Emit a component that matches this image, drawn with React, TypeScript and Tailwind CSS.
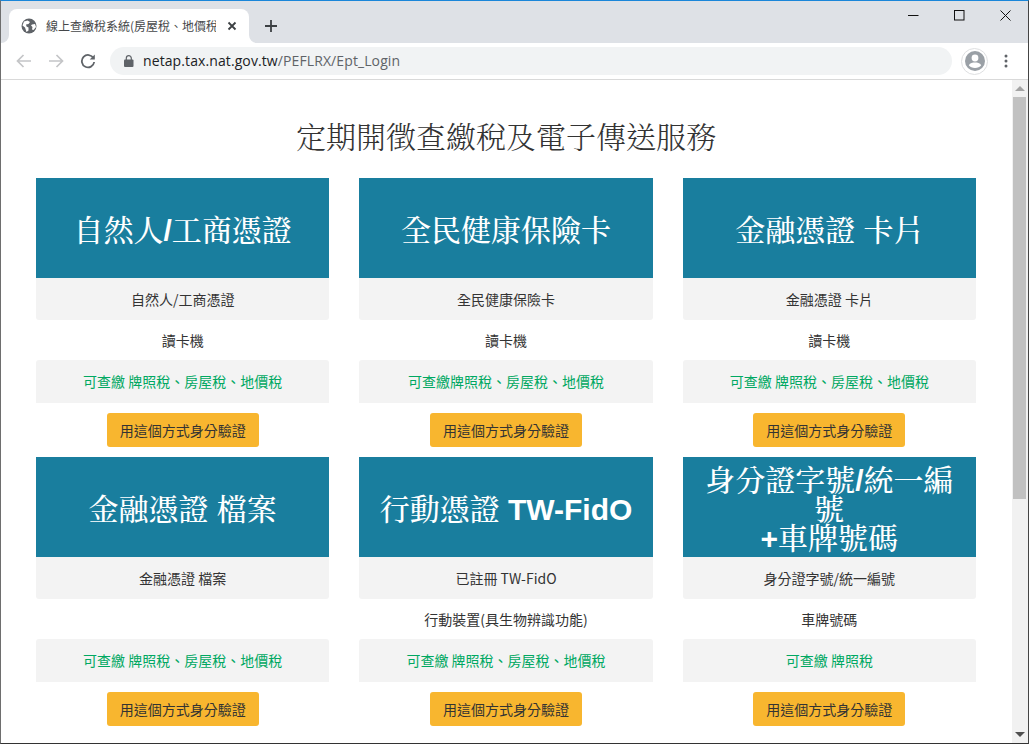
import React from "react";

type Card = { head: React.ReactNode; label: string; device: string; scope: string };

const L = ({ children }: { children: React.ReactNode }) => <span className="font-bold">{children}</span>;

const cards: Card[] = [
  { head: <>自然人<L>/</L>工商憑證</>, label: "自然人/工商憑證", device: "讀卡機", scope: "可查繳 牌照稅、房屋稅、地價稅" },
  { head: "全民健康保險卡", label: "全民健康保險卡", device: "讀卡機", scope: "可查繳牌照稅、房屋稅、地價稅" },
  { head: "金融憑證 卡片", label: "金融憑證 卡片", device: "讀卡機", scope: "可查繳 牌照稅、房屋稅、地價稅" },
  { head: "金融憑證 檔案", label: "金融憑證 檔案", device: "", scope: "可查繳 牌照稅、房屋稅、地價稅" },
  { head: <>行動憑證 <L>TW-FidO</L></>, label: "已註冊 TW-FidO", device: "行動裝置(具生物辨識功能)", scope: "可查繳 牌照稅、房屋稅、地價稅" },
  { head: <>身分證字號<L>/</L>統一編號<br /><L>+</L>車牌號碼</>, label: "身分證字號/統一編號", device: "車牌號碼", scope: "可查繳 牌照稅" },
];

const SANS = '"Noto Sans CJK TC", sans-serif';

function CardView({ c }: { c: Card }) {
  return (
    <div className="flex flex-col items-stretch text-center text-[14px] text-[#333]">
      <div className="flex h-[100px] items-center justify-center overflow-hidden bg-[#197e9e] px-[15px] pt-[4px] text-[30px] font-medium leading-[29px] text-white">
        <div>{c.head}</div>
      </div>
      <div style={{ fontFamily: SANS }} className="flex flex-col">
        <div className="flex h-[42px] items-center justify-center rounded-b-[3px] bg-[#f3f3f3] pt-[1px]">{c.label}</div>
        <div className="flex h-[40px] items-center justify-center">{c.device}</div>
        <div className="flex h-[43px] items-center justify-center rounded-t-[3px] bg-[#f3f3f3] text-[#00a862]">{c.scope}</div>
        <div className="flex justify-center pt-[10px] pb-[10px]">
          <button className="h-[34px] w-[152px] rounded-[3px] bg-[#f8b62f] pt-[1px] text-[14px] text-[#333]">用這個方式身分驗證</button>
        </div>
      </div>
    </div>
  );
}

export default function App() {
  return (
    <div
      className="flex h-[744px] w-[1029px] flex-col overflow-hidden border border-t-[#1a86d9] border-r-[#444] border-b-[#333] border-l-[#6e6e6e] bg-white"
      style={{ fontFamily: '"Liberation Sans", "Noto Serif CJK TC", "Noto Sans CJK TC", sans-serif' }}
    >
      {/* tab strip */}
      <div className="flex h-[42px] shrink-0 items-end bg-[#dee1e6] pl-[8px]" style={{ fontFamily: SANS }}>
        <div className="relative flex h-[34px] w-[240px] items-center rounded-t-[8px] bg-white pl-[12px] pr-[12px]">
          <svg width="16" height="16" viewBox="0 0 16 16" className="shrink-0">
            <circle cx="8" cy="8" r="7.5" fill="#5f6368" />
            <path d="M3 3.500 6.500 2.500 9 4 7.500 6 5 6.500 5.500 8.500 7.500 9.500 7.500 12.500 5.500 14 4 9.500 1.500 7.500ZM11 6.500 14 6 15 9 12.500 12 11 11.500 11.500 9 10 7.500Z" fill="#fff" />
          </svg>
          <div className="ml-[9px] w-[171px] overflow-hidden whitespace-nowrap text-[12px] text-[#45474a]">線上查繳稅系統(房屋稅、地價稅</div>
          <svg width="10" height="10" viewBox="0 0 10 10" className="ml-[11px] shrink-0">
            <path d="M1.500 1.500 8.500 8.500M8.500 1.500 1.500 8.500" stroke="#3c4043" strokeWidth="1.8" />
          </svg>
          <svg width="8" height="8" viewBox="0 0 8 8" className="absolute bottom-0 right-[-8px]">
            <path d="M0 0V8H8A8 8 0 0 1 0 0Z" fill="#fff" />
          </svg>
          <svg width="8" height="8" viewBox="0 0 8 8" className="absolute bottom-0 left-[-8px]">
            <path d="M8 0V8H0A8 8 0 0 0 8 0Z" fill="#fff" />
          </svg>
        </div>
        <div className="ml-[14px] mb-[9px] flex h-[16px] w-[16px] items-center justify-center">
          <svg width="14" height="14" viewBox="0 0 14 14">
            <path d="M7 1V13M1 7H13" stroke="#3c4043" strokeWidth="1.8" />
          </svg>
        </div>
        <div className="mb-[22px] ml-auto flex items-center self-end pr-[17px]">
          <svg width="11" height="11" viewBox="0 0 11 11" className="mr-[35px]"><path d="M0 5.500H10.500" stroke="#111" strokeWidth="1" /></svg>
          <svg width="11" height="11" viewBox="0 0 11 11" className="mr-[35px]"><rect x=".5" y=".5" width="9.500" height="9.500" fill="none" stroke="#111" /></svg>
          <svg width="11" height="11" viewBox="0 0 11 11"><path d="M.5.5 10.500 10.500M10.500.5.5 10.500" stroke="#111" strokeWidth="1" /></svg>
        </div>
      </div>

      {/* toolbar */}
      <div className="flex h-[37px] shrink-0 items-center border-b border-b-[#d9d9d9] bg-white pl-[15px] pr-[13px]">
        <svg width="16" height="14" viewBox="0 0 16 14"><path d="M15 7H2M7.500 1 1.500 7l6 6" fill="none" stroke="#c4c5c7" strokeWidth="1.7" /></svg>
        <svg width="16" height="14" viewBox="0 0 16 14" className="ml-[16px]"><path d="M1 7H14M8.500 1l6 6-6 6" fill="none" stroke="#c4c5c7" strokeWidth="1.7" /></svg>
        <svg width="16" height="16" viewBox="0 0 16 16" className="ml-[16px]"><path d="M13.500 5.200A6.200 6.200 0 1 0 14.200 9" fill="none" stroke="#5f6368" strokeWidth="1.8" /><path d="M14.800 1.500V6.600H9.700Z" fill="#5f6368" /></svg>
        <div className="ml-[14px] flex h-[28px] w-[842px] items-center rounded-full bg-[#f1f3f4] pl-[14px]">
          <svg width="10" height="12" viewBox="0 0 10 12"><rect y="4.500" width="9.500" height="7.500" rx="1" fill="#5f6368" /><path d="M2.300 5V3.200a2.500 2.500 0 0 1 5 0V5" fill="none" stroke="#5f6368" strokeWidth="1.2" /></svg>
          <div className="ml-[9px] mb-[2px] text-[14px] tracking-[0.1px] text-[#5f6368]" style={{ fontFamily: '"Open Sans", sans-serif' }}>
            <span className="text-[#202124]">netap.tax.nat.gov.tw</span>/PEFLRX/Ept_Login
          </div>
        </div>
        <div className="ml-[9px] flex h-[27px] w-[27px] items-center justify-center rounded-full border border-[#dedfe1]">
          <svg width="22" height="22" viewBox="0 0 22 22">
            <circle cx="11" cy="11" r="10" fill="#9aa0a6" />
            <circle cx="11" cy="8" r="3.400" fill="#fff" />
            <path d="M4.800 15.200C6 13 8.800 12.600 11 12.600s5 .4 6.200 2.600C15.800 17 13.600 18 11 18s-4.800-1-6.200-2.800Z" fill="#fff" />
          </svg>
        </div>
        <svg width="4" height="14" viewBox="0 0 4 14" className="ml-[16px]"><circle cx="2" cy="2" r="1.500" fill="#5f6368" /><circle cx="2" cy="7" r="1.500" fill="#5f6368" /><circle cx="2" cy="12" r="1.500" fill="#5f6368" /></svg>
      </div>

      {/* page + scrollbar */}
      <div className="flex min-h-0 flex-1">
        <main className="min-w-0 flex-1 overflow-hidden pl-[35px]">
          <div className="w-[940px]">
            <h1 className="flex h-[98px] items-end justify-center pb-[24px] text-[30px] font-light leading-[33px] text-[#333]">定期開徵查繳稅及電子傳送服務</h1>
            <div className="grid grid-cols-3 gap-x-[30px]">
              {cards.map((c, i) => (
                <CardView key={i} c={c} />
              ))}
            </div>
          </div>
        </main>
        <div className="flex w-[16px] shrink-0 flex-col bg-[#f1f1f1]">
          <div className="flex h-[17px] w-full items-center justify-center">
            <svg width="10" height="5" viewBox="0 0 10 5"><path d="M0 5 5 0l5 5Z" fill="#a3a3a3" /></svg>
          </div>
          <div className="ml-[1px] h-[402px] w-[13px] bg-[#c1c1c1]" />
          <div className="mt-auto flex h-[17px] w-full items-center justify-center">
            <svg width="10" height="5" viewBox="0 0 10 5"><path d="M0 0 5 5l5-5Z" fill="#505050" /></svg>
          </div>
        </div>
      </div>
    </div>
  );
}
